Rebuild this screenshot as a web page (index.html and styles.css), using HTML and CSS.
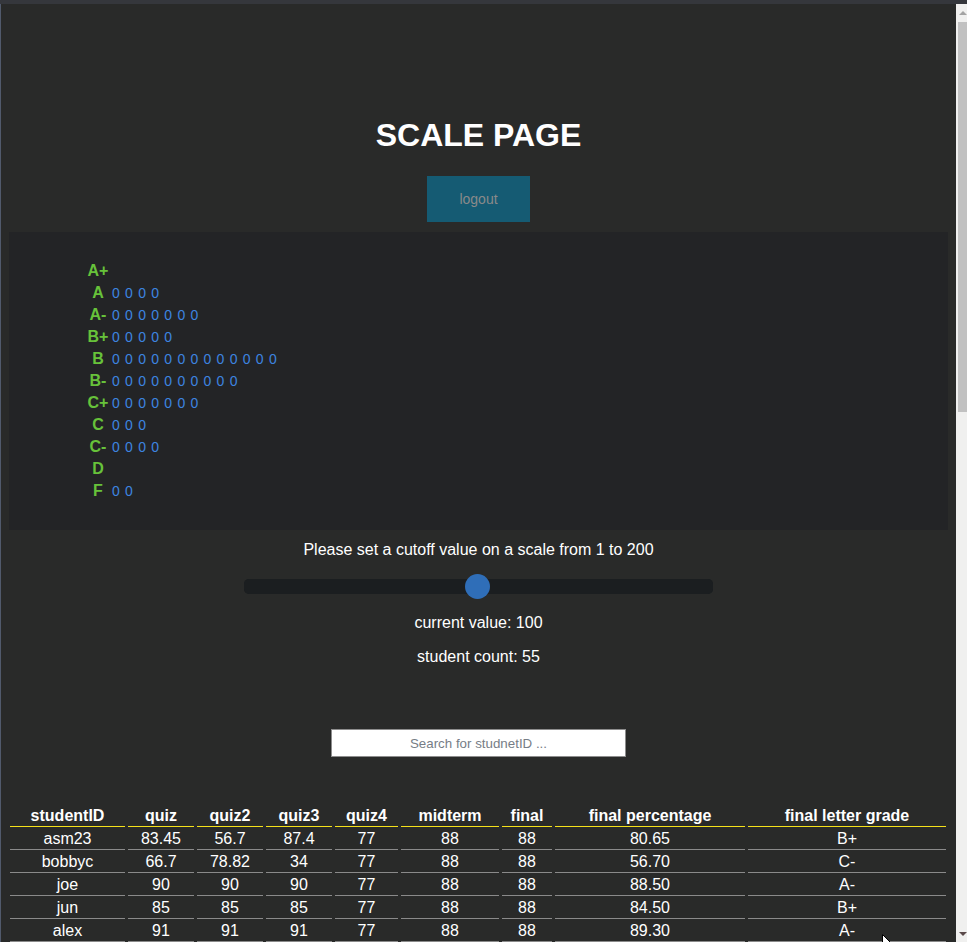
FILE: index.html
```html
<!DOCTYPE html>
<html lang="en">
<head>
<meta charset="utf-8">
<title>Scale Page</title>
<link rel="stylesheet" href="styles.css">
</head>
<body>
<div class="window">
  <main class="page">
    <header class="head">
      <h1 class="title">SCALE PAGE</h1>
      <button class="logout" type="button">logout</button>
    </header>

    <section class="grades">
      <div class="grade-row"><span class="grade">A+</span><span class="marks"></span></div>
      <div class="grade-row"><span class="grade">A</span><span class="marks">0 0 0 0</span></div>
      <div class="grade-row"><span class="grade">A-</span><span class="marks">0 0 0 0 0 0 0</span></div>
      <div class="grade-row"><span class="grade">B+</span><span class="marks">0 0 0 0 0</span></div>
      <div class="grade-row"><span class="grade">B</span><span class="marks">0 0 0 0 0 0 0 0 0 0 0 0 0</span></div>
      <div class="grade-row"><span class="grade">B-</span><span class="marks">0 0 0 0 0 0 0 0 0 0</span></div>
      <div class="grade-row"><span class="grade">C+</span><span class="marks">0 0 0 0 0 0 0</span></div>
      <div class="grade-row"><span class="grade">C</span><span class="marks">0 0 0</span></div>
      <div class="grade-row"><span class="grade">C-</span><span class="marks">0 0 0 0</span></div>
      <div class="grade-row"><span class="grade">D</span><span class="marks"></span></div>
      <div class="grade-row"><span class="grade">F</span><span class="marks">0 0</span></div>
    </section>

    <section class="cutoff">
      <p class="prompt">Please set a cutoff value on a scale from 1 to 200</p>
      <div class="slider-wrap">
        <input class="slider" type="range" min="1" max="200" value="100">
      </div>
      <p class="info info-value">current value: 100</p>
      <p class="info info-count">student count: 55</p>
      <input class="search" type="text" placeholder="Search for studnetID ...">
    </section>

    <table class="scores">
      <colgroup>
        <col class="c-id"><col class="c-q"><col class="c-q"><col class="c-q"><col class="c-q4">
        <col class="c-mid"><col class="c-fin"><col class="c-pct"><col class="c-let">
      </colgroup>
      <thead>
        <tr><th>studentID</th><th>quiz</th><th>quiz2</th><th>quiz3</th><th>quiz4</th><th>midterm</th><th>final</th><th>final percentage</th><th>final letter grade</th></tr>
      </thead>
      <tbody>
        <tr><td>asm23</td><td>83.45</td><td>56.7</td><td>87.4</td><td>77</td><td>88</td><td>88</td><td>80.65</td><td>B+</td></tr>
        <tr><td>bobbyc</td><td>66.7</td><td>78.82</td><td>34</td><td>77</td><td>88</td><td>88</td><td>56.70</td><td>C-</td></tr>
        <tr><td>joe</td><td>90</td><td>90</td><td>90</td><td>77</td><td>88</td><td>88</td><td>88.50</td><td>A-</td></tr>
        <tr><td>jun</td><td>85</td><td>85</td><td>85</td><td>77</td><td>88</td><td>88</td><td>84.50</td><td>B+</td></tr>
        <tr><td>alex</td><td>91</td><td>91</td><td>91</td><td>77</td><td>88</td><td>88</td><td>89.30</td><td>A-</td></tr>
      </tbody>
    </table>
  </main>

  <div class="scrollbar" aria-hidden="true">
    <span class="sb-up"></span>
    <span class="sb-thumb"></span>
    <span class="sb-down"></span>
  </div>

  <svg class="cursor" width="12" height="18" viewBox="0 0 12 18" aria-hidden="true">
    <path d="M0.5 0.5 L0.5 15 L4 11.5 L6.5 17 L8.5 16 L6 10.5 L10.5 10.5 Z" fill="#fff" stroke="#000" stroke-width="1"/>
  </svg>
</div>
</body>
</html>
```

FILE: styles.css
```css
html, body {
  margin: 0;
  padding: 0;
  height: 100%;
  overflow: hidden;
  background: #35373c;
}

.window {
  position: relative;
  height: 938px;
  margin-top: 4px;
  border-left: 1px solid #515a6c;
  background: #292a29;
  font-family: "Liberation Sans", Arial, sans-serif;
  color: #ffffff;
  overflow: hidden;
}

.page {
  width: 939px;
  padding: 0 8px;
}

.head {
  padding-top: 113px;
  display: flex;
  flex-direction: column;
  align-items: center;
}

.title {
  margin: 0 0 22px;
  font-size: 32px;
  line-height: 37px;
  font-weight: bold;
  color: #ffffff;
}

.logout {
  width: 103px;
  height: 46px;
  border: none;
  background: #155b73;
  color: #8a8a8a;
  font-family: "Liberation Sans", Arial, sans-serif;
  font-size: 14px;
  padding: 0;
}

.grades {
  margin-top: 10px;
  height: 298px;
  box-sizing: border-box;
  padding: 28px 0 0 77px;
  background: #232426;
}

.grade-row {
  display: flex;
  align-items: baseline;
  height: 22px;
  line-height: 22px;
}

.grade {
  width: 24px;
  text-align: center;
  font-size: 16px;
  font-weight: bold;
  color: #67c23a;
}

.marks {
  margin-left: 2px;
  font-size: 14px;
  word-spacing: 1.4px;
  color: #3d84e0;
  white-space: pre;
}

.cutoff {
  display: flex;
  flex-direction: column;
  align-items: center;
}

.prompt {
  margin: 11px 0 0;
  font-size: 16px;
  line-height: 18px;
}

.slider-wrap {
  margin-top: 15px;
  height: 25px;
  display: flex;
  align-items: center;
}

.slider {
  -webkit-appearance: none;
  appearance: none;
  width: 469px;
  height: 15px;
  margin: 0;
  border-radius: 5px;
  background: #1b1e20;
  outline: none;
}

.slider::-webkit-slider-runnable-track {
  height: 15px;
  border-radius: 5px;
  background: #1b1e20;
}

.slider::-webkit-slider-thumb {
  -webkit-appearance: none;
  appearance: none;
  width: 25px;
  height: 25px;
  margin-top: -5px;
  border-radius: 50%;
  background: #2f6eb8;
  border: none;
}

.info {
  margin: 0;
  font-size: 16px;
  line-height: 18px;
}

.info-value {
  margin-top: 15px;
}

.info-count {
  margin-top: 16px;
}

.search {
  margin-top: 63px;
  width: 295px;
  height: 28px;
  box-sizing: border-box;
  border: 1px solid #8d8d8d;
  background: #ffffff;
  font-family: "Liberation Sans", Arial, sans-serif;
  font-size: 13.33px;
  text-align: center;
  padding: 0 4px;
}

.search::placeholder {
  color: #767d86;
}

.scores {
  margin: 47px 0 0 -2px;
  width: 942px;
  table-layout: fixed;
  border-collapse: separate;
  border-spacing: 3px 2px;
  font-size: 16px;
  line-height: 18px;
}

.c-id { width: 115px; }
.c-q { width: 66px; }
.c-q4 { width: 63px; }
.c-mid { width: 98px; }
.c-fin { width: 50px; }
.c-pct { width: 190px; }
.c-let { width: 198px; }

.scores th,
.scores td {
  padding: 1px 0;
  text-align: center;
  white-space: nowrap;
  color: #ffffff;
}

.scores th {
  font-weight: bold;
  border-bottom: 1px solid #f5e11a;
}

.scores td {
  font-weight: normal;
  border-bottom: 1px solid #8a8a8a;
}

.scrollbar {
  position: absolute;
  top: 0;
  right: 0;
  width: 11px;
  height: 100%;
  background: #f0f0ef;
}

.sb-up {
  position: absolute;
  top: 7px;
  left: 3px;
  width: 0;
  height: 0;
  border-left: 4px solid transparent;
  border-right: 4px solid transparent;
  border-bottom: 4px solid #a3a3a3;
}

.sb-thumb {
  position: absolute;
  top: 18px;
  left: 2px;
  right: 0;
  height: 390px;
  background: #c1c1c1;
}

.sb-down {
  position: absolute;
  bottom: 6px;
  left: 3px;
  width: 0;
  height: 0;
  border-left: 4px solid transparent;
  border-right: 4px solid transparent;
  border-top: 4px solid #5a4a4a;
}

.cursor {
  position: absolute;
  left: 881px;
  top: 930px;
}
```
